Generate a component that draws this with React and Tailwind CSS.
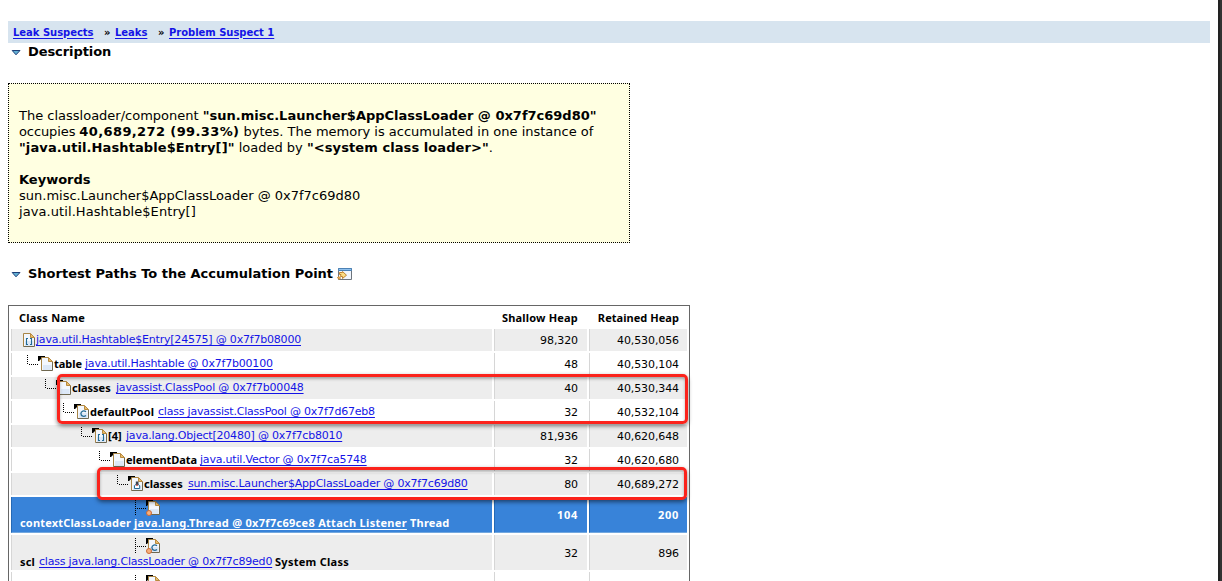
const ROWS = [
  { pad: "pl-[11px]", kind: "array", root: true, link: "java.util.Hashtable$Entry[24575] @ 0x7f7b08000", shallow: "98,320", retained: "40,530,056", shade: true },
  { pad: "pl-[15px]", kind: "file", label: "table", labelW: "w-[31px]", link: "java.util.Hashtable @ 0x7f7b00100", shallow: "48", retained: "40,530,104" },
  { pad: "pl-[33px]", kind: "file", label: "classes", labelW: "w-[44px]", link: "javassist.ClassPool @ 0x7f7b00048", shallow: "40", retained: "40,530,344", shade: true },
  { pad: "pl-[51px]", kind: "class", label: "defaultPool", labelW: "w-[68px] tracking-[0.05px]", link: "class javassist.ClassPool @ 0x7f7d67eb8", shallow: "32", retained: "40,532,104" },
  { pad: "pl-[69px]", kind: "array", label: "[4]", labelW: "w-[18px]", link: "java.lang.Object[20480] @ 0x7f7cb8010", shallow: "81,936", retained: "40,620,648", shade: true },
  { pad: "pl-[87px]", kind: "file", label: "elementData", labelW: "w-[74px] tracking-[-0.05px]", link: "java.util.Vector @ 0x7f7ca5748", shallow: "32", retained: "40,620,680" },
  { pad: "pl-[105px]", kind: "loader", label: "classes", labelW: "w-[44px]", link: "sun.misc.Launcher$AppClassLoader @ 0x7f7c69d80", shallow: "80", retained: "40,689,272", shade: true },
];

const LINK = "text-[#1414e6] underline underline-offset-2 decoration-1 tracking-[-0.2px]";
const HEAVY = "font-['Noto_Sans',sans-serif] font-bold";
const BOLD = "font-['Noto_Sans',sans-serif] font-bold tracking-[0.19px]";

function FileShape({ kind }) {
  return (
    <>
      <path d="M.5 .5H7.5L11.5 4.5V13.5H.5Z" fill="#f3f7fd" />
      <path d="M2 8H10.5V13H2Z" fill="#dce8f7" />
      <path d="M.5 13.5V.5H7.5" fill="none" stroke="#a98545" />
      <path d="M.5 13.5H11.5V4.5" fill="none" stroke="#6f6850" />
      <path d="M7.5 .5L11.5 4.5H7.5Z" fill="#e8bd6d" stroke="#b98a3e" />
      {kind === "array" && (
        <path d="M5 5.5H3.5V11.5H5M7 5.5H8.5V11.5H7" fill="none" stroke="#236b96" strokeWidth="1.1" />
      )}
      {kind === "class" && (
        <path d="M9 6.8C7.2 5.2 3.9 5.7 3.9 8.6S7.2 12 9 10.4" fill="none" stroke="#236b96" strokeWidth="1.3" />
      )}
      {kind === "loader" && (
        <>
          <path d="M4.5 7.5H7.5L8.7 9V11.5H3.5V9Z" fill="#fff" stroke="#236b96" />
          <path d="M4.8 4.5H7.5V7.5H4.8Z" fill="#39434c" />
          <path d="M5 7.5H7V8.8H5Z" fill="#c63d32" />
        </>
      )}
    </>
  );
}

function TreeIcon({ kind }) {
  return (
    <svg width="27" height="20" viewBox="0 0 27 20" className="block shrink-0">
      <path d="M.5 2V12" stroke="#000" strokeDasharray="1 1" />
      <path d="M2 11.5H12" stroke="#000" strokeDasharray="1 1" />
      <path d="M11 3H18V5H15L12 8H11Z" fill="#000" />
      <g transform="translate(14 4)"><FileShape kind={kind} /></g>
    </svg>
  );
}

function RootIcon({ kind, className }) {
  return (
    <svg width="26" height="17" viewBox="0 0 26 17" className={`block shrink-0 overflow-visible ${className}`}>
      <path d="M.5 0V16" stroke="#000" strokeDasharray="1 1" />
      <path d="M2 8.5H11" stroke="#000" strokeDasharray="1 1" />
      <path d="M11 0H18V2H15L12 6H11Z" fill="#000" />
      <g transform="translate(13 1)"><FileShape kind={kind} /></g>
      <circle cx="14" cy="13" r="2.5" fill="#f8b07c" stroke="#cb6a35" />
    </svg>
  );
}

function Triangle() {
  return (
    <svg width="10" height="6" viewBox="0 0 10 6" className="relative top-px block shrink-0">
      <path d="M1.2 .5H9L5 4.8Z" fill="#62b0d4" stroke="#1c3f78" />
    </svg>
  );
}

function NumberCells({ shallow, retained, tone, text = "" }) {
  return (
    <>
      <div className={`flex items-center justify-end border-l pr-[9px] ${tone} ${text}`}>{shallow}</div>
      <div className={`flex items-center justify-end border-l pr-[8px] ${tone} ${text}`}>{retained}</div>
    </>
  );
}

const GRID = "grid grid-cols-[481px_93px_98px] gap-x-[2px]";

function PathRow({ row }) {
  const tone = row.shade ? "bg-[#ededed] border-[#d6d6d6]" : "bg-white border-[#d6d6d6]";
  return (
    <div className={`${GRID} h-[22px] shrink-0`}>
      <div className={`flex border-l ${tone} ${row.pad}`}>
        {row.root ? (
          <svg width="13" height="18" viewBox="0 -4 13 18" className="block shrink-0">
            <FileShape kind={row.kind} />
          </svg>
        ) : (
          <TreeIcon kind={row.kind} />
        )}
        <div className="flex h-[22px] items-center whitespace-nowrap">
          {row.label && <span className={`${row.labelW} ${HEAVY}`}>{row.label}</span>}
          <a className={LINK}>{row.link}</a>
        </div>
      </div>
      <NumberCells shallow={row.shallow} retained={row.retained} tone={tone} text="pt-px tracking-[-0.1px]" />
    </div>
  );
}

export default function App() {
  return (
    <div className="relative flex h-[581px] w-[1222px] overflow-hidden bg-white font-['DejaVu_Sans',sans-serif] text-black">
      <div className="flex w-[1218px] shrink-0 flex-col pl-[8px]">
        <nav className="mt-[21px] flex h-[22px] w-[1202px] shrink-0 items-center whitespace-nowrap bg-[#d7e4ef] pl-[5px] text-[10px] font-bold tracking-[-0.03px]">
          <a className="w-[91px] text-[#1414e6] underline underline-offset-2">Leak Suspects</a>
          <span className="w-[11px]">»</span>
          <a className="w-[43px] text-[#1414e6] underline underline-offset-2">Leaks</a>
          <span className="w-[11px]">»</span>
          <a className="text-[#1414e6] underline underline-offset-2">Problem Suspect 1</a>
        </nav>
        <h2 className="flex h-[17px] shrink-0 items-center gap-[7px] pl-[3px] text-[13px] font-bold tracking-[-0.08px]">
          <Triangle />
          Description
        </h2>

        <section className="mt-[23px] h-[160px] w-[622px] shrink-0 whitespace-nowrap border border-dotted border-black bg-[#ffffe1] px-[10px] pt-[24px] text-[13px] leading-[16px]">
          <p>
            The classloader/component <b>"sun.misc.Launcher$AppClassLoader @ 0x7f7c69d80"</b>
          </p>
          <p>
            <span className="tracking-[-0.1px]">occupies </span>
            <b className="tracking-[0.38px]">40,689,272 (99.33%)</b> bytes. The memory is accumulated in one instance of
          </p>
          <p>
            <b className="tracking-[0.1px]">"java.util.Hashtable$Entry[]"</b> loaded by <b className="tracking-[0.08px]">"&lt;system class loader&gt;"</b>.
          </p>
          <p className="mt-[16px] font-bold">Keywords</p>
          <p>sun.misc.Launcher$AppClassLoader @ 0x7f7c69d80</p>
          <p className="tracking-[0.08px]">java.util.Hashtable$Entry[]</p>
        </section>

        <h2 className="mt-[22px] flex h-[17px] shrink-0 items-center pl-[3px] text-[13px] font-bold">
          <Triangle />
          <span className="ml-[7px] w-[309px] whitespace-nowrap">Shortest Paths To the Accumulation Point</span>
          <svg width="15" height="13" viewBox="0 0 15 13" className="relative top-px block">
            <path d="M1.5 .5H14.5V11.5H1.5Z" fill="#f1f6fd" stroke="#6d747c" />
            <path d="M1.5 .5H14.5V2.5H1.5Z" fill="#8fc1ee" stroke="#4c82b5" />
            <path d="M2.5 4.5H5.5V3.5L9.5 7.2L5.5 10.5V8.5H3.5L4 6.5H2.5Z" fill="#fbdc83" stroke="#c08430" />
            <path d="M.5 9.5L2 8.5L3.5 10L2 11.5Z" fill="#f5b95b" stroke="#c08430" />
          </svg>
        </h2>

        <section className="mt-[23px] flex w-[682px] shrink-0 flex-col gap-y-[2px] border border-[#666] pb-[20px] pl-[2px] pt-[2px] text-[11px] leading-[14px]">
          <div className={`${GRID} ${HEAVY} h-[19px] shrink-0 items-center`}>
            <div className="pl-[8px] tracking-[0.23px]">Class Name</div>
            <div className="pr-[9px] text-right tracking-[0.18px]">Shallow Heap</div>
            <div className="pr-[8px] text-right tracking-[0.05px]">Retained Heap</div>
          </div>
          {ROWS.map((row) => (
            <PathRow key={row.link} row={row} />
          ))}
          <div className={`${GRID} h-[36px] shrink-0 text-white`}>
            <div className="border-b border-l border-b-[#73a8df] border-l-[#2569b5] bg-[#3883d9] pl-[8px] pt-[3px]">
              <RootIcon kind="file" className="-mb-px ml-[115px]" />
              <div className={`flex h-[14px] items-center whitespace-nowrap ${HEAVY}`}>
                <span className="w-[114px] tracking-[0.17px]">contextClassLoader</span>
                <a className="w-[276px] tracking-[0.29px] underline underline-offset-2">java.lang.Thread @ 0x7f7c69ce8 Attach Listener</a>
                <span className="tracking-[0.2px]">Thread</span>
              </div>
            </div>
            <NumberCells shallow="104" retained="200" tone="border-b border-b-[#73a8df] border-l-[#2569b5] bg-[#3883d9]" text="font-['Noto_Sans',sans-serif] font-bold tracking-[0.7px]" />
          </div>
          <div className={`${GRID} h-[35px] shrink-0`}>
            <div className="border-l border-[#d6d6d6] bg-[#ededed] pl-[8px] pt-[3px]">
              <RootIcon kind="class" className="ml-[115px]" />
              <div className="flex h-[14px] items-center whitespace-nowrap">
                <span className={`w-[19px] ${BOLD}`}>scl</span>
                <a className={`w-[236px] ${LINK}`}>class java.lang.ClassLoader @ 0x7f7c89ed0</a>
                <span className={`${HEAVY} tracking-[0.27px]`}>System Class</span>
              </div>
            </div>
            <NumberCells shallow="32" retained="896" tone="bg-[#ededed] border-[#d6d6d6]" text="pt-[2px] tracking-[-0.1px]" />
          </div>
          <div className={`${GRID} h-[36px] shrink-0`}>
            <div className="border-l border-[#d6d6d6] pl-[8px] pt-[3px]">
              <RootIcon kind="file" className="ml-[115px]" />
            </div>
            <NumberCells tone="border-[#d6d6d6]" />
          </div>
        </section>
      </div>
      <div className="w-[4px] shrink-0 border-x-2 border-l-[#222] border-r-[#333] bg-[#222]" />
      <div className="absolute left-[57px] top-[374px] h-[50px] w-[631px] rounded-[5px] border-[3px] border-[#fb231c] shadow-[0_2px_4px_rgba(0,0,0,0.5),inset_0_2px_3px_rgba(0,0,0,0.3)]" />
      <div className="absolute left-[97px] top-[467px] h-[33px] w-[590px] rounded-[5px] border-[3px] border-[#fb231c] shadow-[0_2px_4px_rgba(0,0,0,0.5),inset_0_2px_3px_rgba(0,0,0,0.3)]" />
    </div>
  );
}
